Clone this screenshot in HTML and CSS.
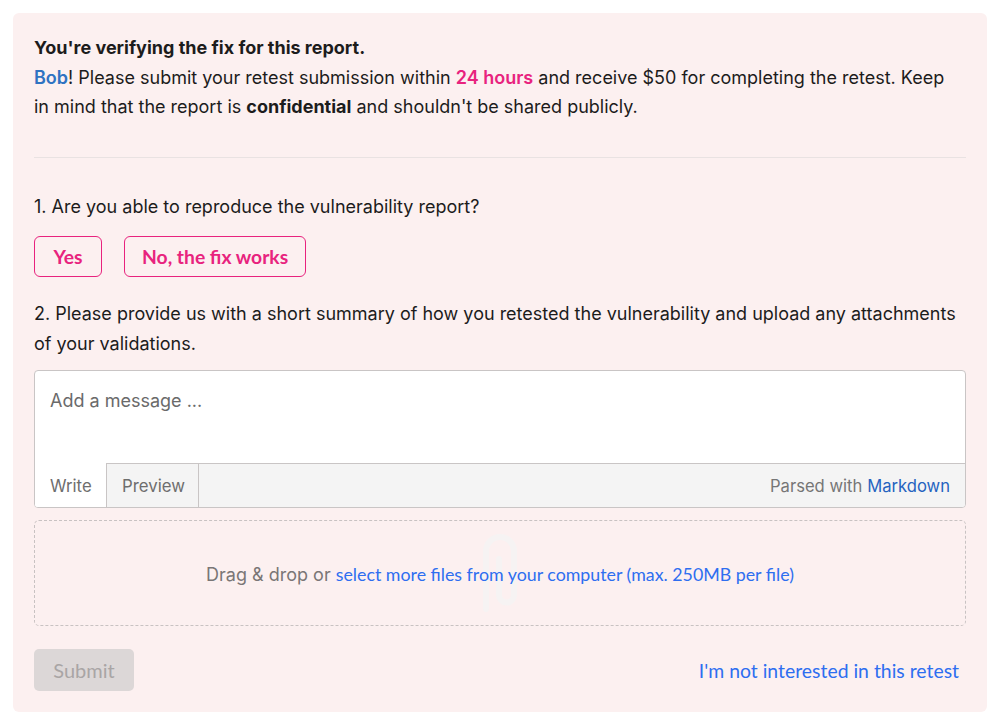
FILE: index.html
```html
<!DOCTYPE html>
<html>
<head>
<meta charset="utf-8">
<link rel="stylesheet" href="styles.css">
</head>
<body>
<div class="card">
  <div class="intro">
    <p class="title">You're verifying the fix for this report.</p>
    <p class="desc"><span class="name">Bob</span>! Please submit your retest submission within <span class="hours">24 hours</span> and receive $50 for completing the retest. Keep in mind that the report is <strong>confidential</strong> and shouldn't be shared publicly.</p>
  </div>
  <hr class="divider">
  <p class="question q1">1. Are you able to reproduce the vulnerability report?</p>
  <div class="choices">
    <button class="choice yes">Yes</button>
    <button class="choice">No, the ﬁx works</button>
  </div>
  <p class="question q2">2. Please provide us with a short summary of how you retested the vulnerability and upload any attachments of your validations.</p>
  <div class="editor">
    <div class="textarea">Add a message ...</div>
    <div class="tabs">
      <span class="tab active">Write</span>
      <span class="tab">Preview</span>
      <span class="parsed">Parsed with <a class="md">Markdown</a></span>
    </div>
  </div>
  <div class="dropzone">
    <svg class="clip" width="46" height="84" viewBox="0 0 46 84"><path d="M9 78 V20 a14 14 0 0 1 28 0 V64 a7.5 7.5 0 0 1 -15 0 V28" fill="none" stroke="#f6f3f3" stroke-width="6" stroke-linecap="round"/></svg>
    <span class="drop-text">Drag &amp; drop or <a class="select">select more ﬁles from your computer (max. 250MB per ﬁle)</a></span>
  </div>
  <div class="footer">
    <button class="submit">Submit</button>
    <a class="decline">I'm not interested in this retest</a>
  </div>
</div>
</body>
</html>
```
FILE: styles.css
```css
* { box-sizing: border-box; }
body {
  margin: 0;
  padding: 13px;
  background: #fff;
  font-family: Inter, "Noto Sans", sans-serif;
  color: #1c1c1c;
}
.card {
  background: #fcf0f0;
  border-radius: 6px;
  padding: 20px 21px 21px 21px;
  height: 699px;
  width: 974px;
}
p { margin: 0; }
.title {
  font-weight: 700;
  font-size: 18px;
  line-height: 29.5px;
}
.desc {
  font-size: 18px;
  line-height: 29.5px;
  padding-right: 12px;
}
.name { color: #2f73c2; font-weight: 600; }
.hours { color: #e8237e; font-weight: 600; }
.desc strong { font-weight: 700; }
.divider {
  border: 0;
  border-top: 1px solid #e9e2e2;
  margin: 35px 0 0 0;
}
.question {
  font-size: 18px;
  line-height: 29.5px;
}
.q1 { margin-top: 34px; }
.choices {
  display: flex;
  gap: 22px;
  margin-top: 15px;
}
.choice {
  height: 41px;
  padding: 0 17px;
  border: 1.5px solid #e8237e;
  border-radius: 6px;
  background: transparent;
  color: #e8237e;
  font-family: Lato, "Open Sans", sans-serif;
  font-weight: 700;
  font-size: 19.3px;
}
.choice.yes { min-width: 68px; }
.q2 { margin-top: 22px; }
.editor {
  margin-top: 12px;
  border: 1px solid #c9c5c5;
  border-radius: 4px;
  background: #fff;
  overflow: hidden;
}
.textarea {
  height: 92px;
  padding: 19px 15px;
  font-size: 18px;
  color: #6a6a6a;
}
.tabs {
  display: flex;
  align-items: stretch;
  height: 44px;
  border-top: 1px solid #c9c5c5;
  background: #f4f4f4;
  font-size: 16.8px;
  color: #6e6e6e;
}
.tab {
  display: flex;
  align-items: center;
  padding: 0 15px;
  border-right: 1px solid #c9c5c5;
  background: #f4f4f4;
}
.tab.active {
  background: #fff;
  margin-top: -1px;
  padding-top: 1px;
  width: 72px;
}
.tab:nth-child(2) { width: 92px; }
.parsed {
  margin-left: auto;
  display: flex;
  align-items: center;
  padding-right: 15px;
  font-size: 16.6px;
  color: #767676;
}
.md { color: #2563c0; margin-left: 5px; }
.dropzone {
  position: relative;
  margin-top: 12px;
  height: 106px;
  border: 1.5px dashed #c8c2c2;
  border-radius: 5px;
  display: flex;
  align-items: center;
  justify-content: center;
  padding-top: 2px;
}
.clip {
  position: absolute;
  left: 442px;
  top: 10px;
}
.drop-text {
  position: relative;
  font-size: 18px;
  color: #7a7676;
}
.select {
  color: #2e6ef0;
  font-family: Lato, "Open Sans", sans-serif;
  font-size: 17.8px;
}
.footer {
  display: flex;
  align-items: center;
  justify-content: space-between;
  margin-top: 23px;
}
.submit {
  width: 100px;
  height: 42px;
  border: 0;
  border-radius: 5px;
  background: #dcd7d7;
  color: #a9a5a5;
  font-family: Lato, "Open Sans", sans-serif;
  font-size: 20px;
}
.decline {
  color: #2e6ef0;
  font-family: Lato, "Open Sans", sans-serif;
  font-size: 19.4px;
  margin-right: 7px;
}
```
